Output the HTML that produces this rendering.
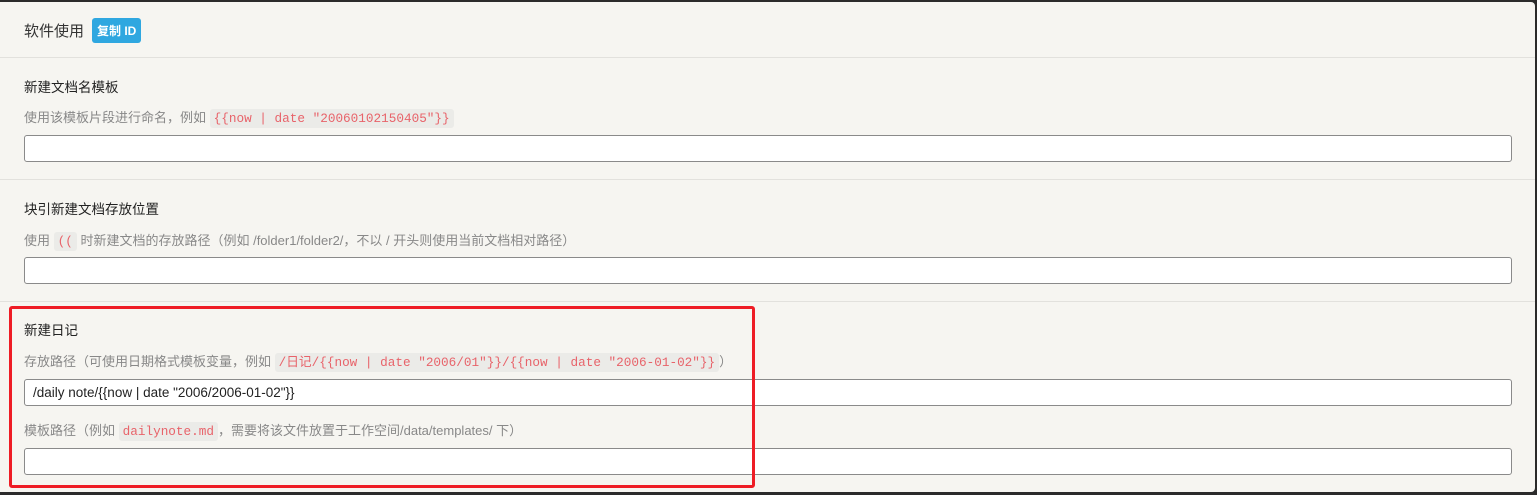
<!DOCTYPE html><html><head><meta charset="utf-8"><style>
body{margin:0;width:1537px;height:495px;background:#2b2b2b;overflow:hidden;font-family:"Liberation Sans","Noto Sans CJK SC",sans-serif;}
.p{position:absolute;left:0;top:2px;width:1535px;height:490px;background:#f6f5f1;border-radius:0 4px 4px 0;}
.t{position:absolute;left:24px;font-size:13.5px;color:#222;}
.d{position:absolute;left:24px;font-size:13px;color:#888;white-space:nowrap;}
code{font-family:"Liberation Mono","Noto Sans CJK SC",monospace;font-size:12.7px;color:#e8636a;background:#ebebe8;border-radius:3px;padding:2px 4px;}
.i{position:absolute;left:24px;height:25px;background:#fff;border:1px solid #8a8a8a;border-radius:3px;font-size:13.5px;color:#222;line-height:25px;padding-left:8px;width:1478px;}
.s{position:absolute;left:0;width:1535px;height:1px;background:#e2e1dd;}
.b{display:inline-block;background:#2fa7e0;color:#fff;font-size:12px;font-weight:bold;border-radius:3px;padding:4px 5px;vertical-align:1px;margin-left:8px;}
.r{position:absolute;left:9px;top:306px;width:740px;height:176px;border:3px solid #ee1c25;border-radius:3px;}
</style></head><body><div class="p">
<div class="t" style="top:16px;font-size:15px;color:#333">软件使用<span class="b">复制 ID</span></div>
<div class="s" style="top:55px"></div>
<div class="t" style="top:74px">新建文档名模板</div>
<div class="d" style="top:105px">使用该模板片段进行命名，例如 <code>{{now | date "20060102150405"}}</code></div>
<div class="i" style="top:133px"></div>
<div class="s" style="top:177px"></div>
<div class="t" style="top:196px">块引新建文档存放位置</div>
<div class="d" style="top:228px">使用 <code>((</code> 时新建文档的存放路径（例如 /folder1/folder2/，不以 / 开头则使用当前文档相对路径）</div>
<div class="i" style="top:255px"></div>
<div class="s" style="top:299px"></div>
<div class="t" style="top:317px">新建日记</div>
<div class="d" style="top:349px">存放路径（可使用日期格式模板变量，例如 <code>/日记/{{now | date "2006/01"}}/{{now | date "2006-01-02"}}</code>）</div>
<div class="i" style="top:377px">/daily note/{{now | date "2006/2006-01-02"}}</div>
<div class="d" style="top:418px">模板路径（例如 <code>dailynote.md</code>，需要将该文件放置于工作空间/data/templates/ 下）</div>
<div class="i" style="top:446px"></div>
</div><div class="r"></div></body></html>
